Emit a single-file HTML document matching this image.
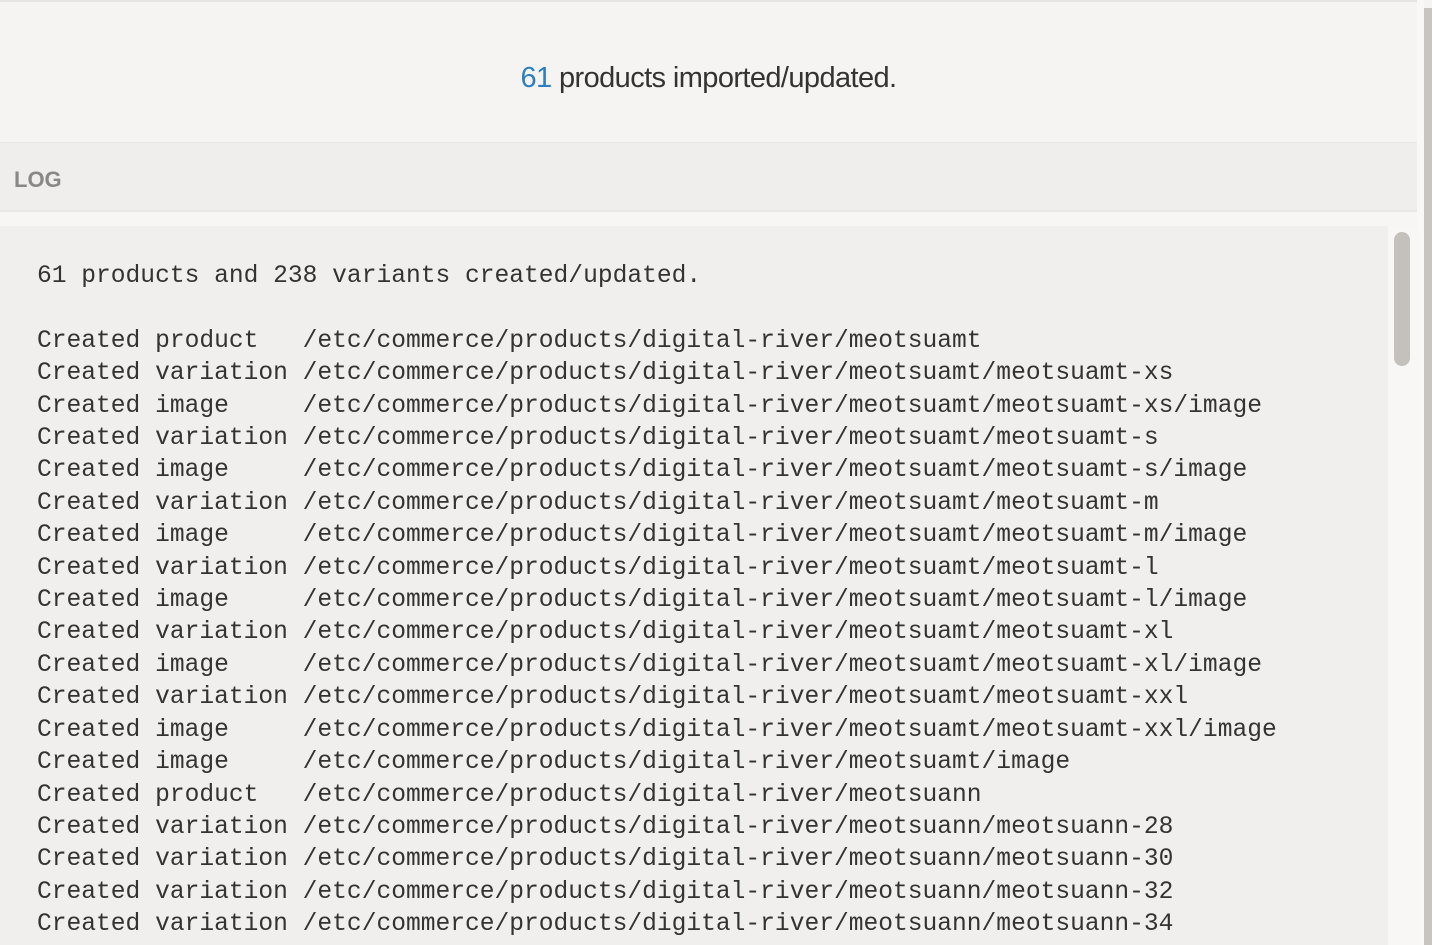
<!DOCTYPE html>
<html><head><meta charset="utf-8"><style>
html,body{margin:0;width:1432px;height:945px;overflow:hidden}
body{background:#f5f4f2;position:relative;font-family:"Liberation Sans",sans-serif}
.top{position:absolute;left:0;top:0;width:1417px;height:142px;background:#f5f4f2;border-top:2px solid #e6e5e3;box-sizing:border-box}
.top div{position:absolute;top:60px;width:100%;text-align:center;font-size:29px;color:#333;letter-spacing:-0.6px}
.top span{color:#2d7fc4}
.hdr{position:absolute;left:0;top:142px;width:1417px;height:70px;background:#efeeec;border-top:1px solid #e8e7e5;border-bottom:2px solid #e8e7e5;box-sizing:border-box}
.hdr div{position:absolute;left:14px;top:24px;font-size:22px;font-weight:bold;color:#888}
.gap{position:absolute;left:0;top:212px;width:1417px;height:14px;background:#f7f6f4}
.log{position:absolute;left:0;top:226px;width:1388px;height:719px;background:#f0efed;overflow:hidden}
.track{position:absolute;left:1388px;top:226px;width:29px;height:719px;background:#f8f7f5}
.thumb{position:absolute;left:1394px;top:232px;width:16px;height:134px;border-radius:8px;background:#c4c1bc}
.edge{position:absolute;left:1417px;top:0;width:7px;height:945px;background:#f9f8f6}
.bar{position:absolute;left:1424px;top:8px;width:8px;height:937px;background:#c8c5c0}
pre{position:absolute;left:37px;top:35px;margin:0;font-family:"Liberation Mono",monospace;font-size:24.6px;line-height:32.4px;color:#333}
</style></head><body>
<div class="top"><div><span>61</span> products imported/updated.</div></div>
<div class="hdr"><div>LOG</div></div>
<div class="gap"></div>
<div class="log"><pre>61 products and 238 variants created/updated.

Created product   /etc/commerce/products/digital-river/meotsuamt
Created variation /etc/commerce/products/digital-river/meotsuamt/meotsuamt-xs
Created image     /etc/commerce/products/digital-river/meotsuamt/meotsuamt-xs/image
Created variation /etc/commerce/products/digital-river/meotsuamt/meotsuamt-s
Created image     /etc/commerce/products/digital-river/meotsuamt/meotsuamt-s/image
Created variation /etc/commerce/products/digital-river/meotsuamt/meotsuamt-m
Created image     /etc/commerce/products/digital-river/meotsuamt/meotsuamt-m/image
Created variation /etc/commerce/products/digital-river/meotsuamt/meotsuamt-l
Created image     /etc/commerce/products/digital-river/meotsuamt/meotsuamt-l/image
Created variation /etc/commerce/products/digital-river/meotsuamt/meotsuamt-xl
Created image     /etc/commerce/products/digital-river/meotsuamt/meotsuamt-xl/image
Created variation /etc/commerce/products/digital-river/meotsuamt/meotsuamt-xxl
Created image     /etc/commerce/products/digital-river/meotsuamt/meotsuamt-xxl/image
Created image     /etc/commerce/products/digital-river/meotsuamt/image
Created product   /etc/commerce/products/digital-river/meotsuann
Created variation /etc/commerce/products/digital-river/meotsuann/meotsuann-28
Created variation /etc/commerce/products/digital-river/meotsuann/meotsuann-30
Created variation /etc/commerce/products/digital-river/meotsuann/meotsuann-32
Created variation /etc/commerce/products/digital-river/meotsuann/meotsuann-34
Created variation /etc/commerce/products/digital-river/meotsuann/meotsuann-36</pre></div>
<div class="track"></div><div class="thumb"></div>
<div class="edge"></div><div class="bar"></div>
</body></html>
